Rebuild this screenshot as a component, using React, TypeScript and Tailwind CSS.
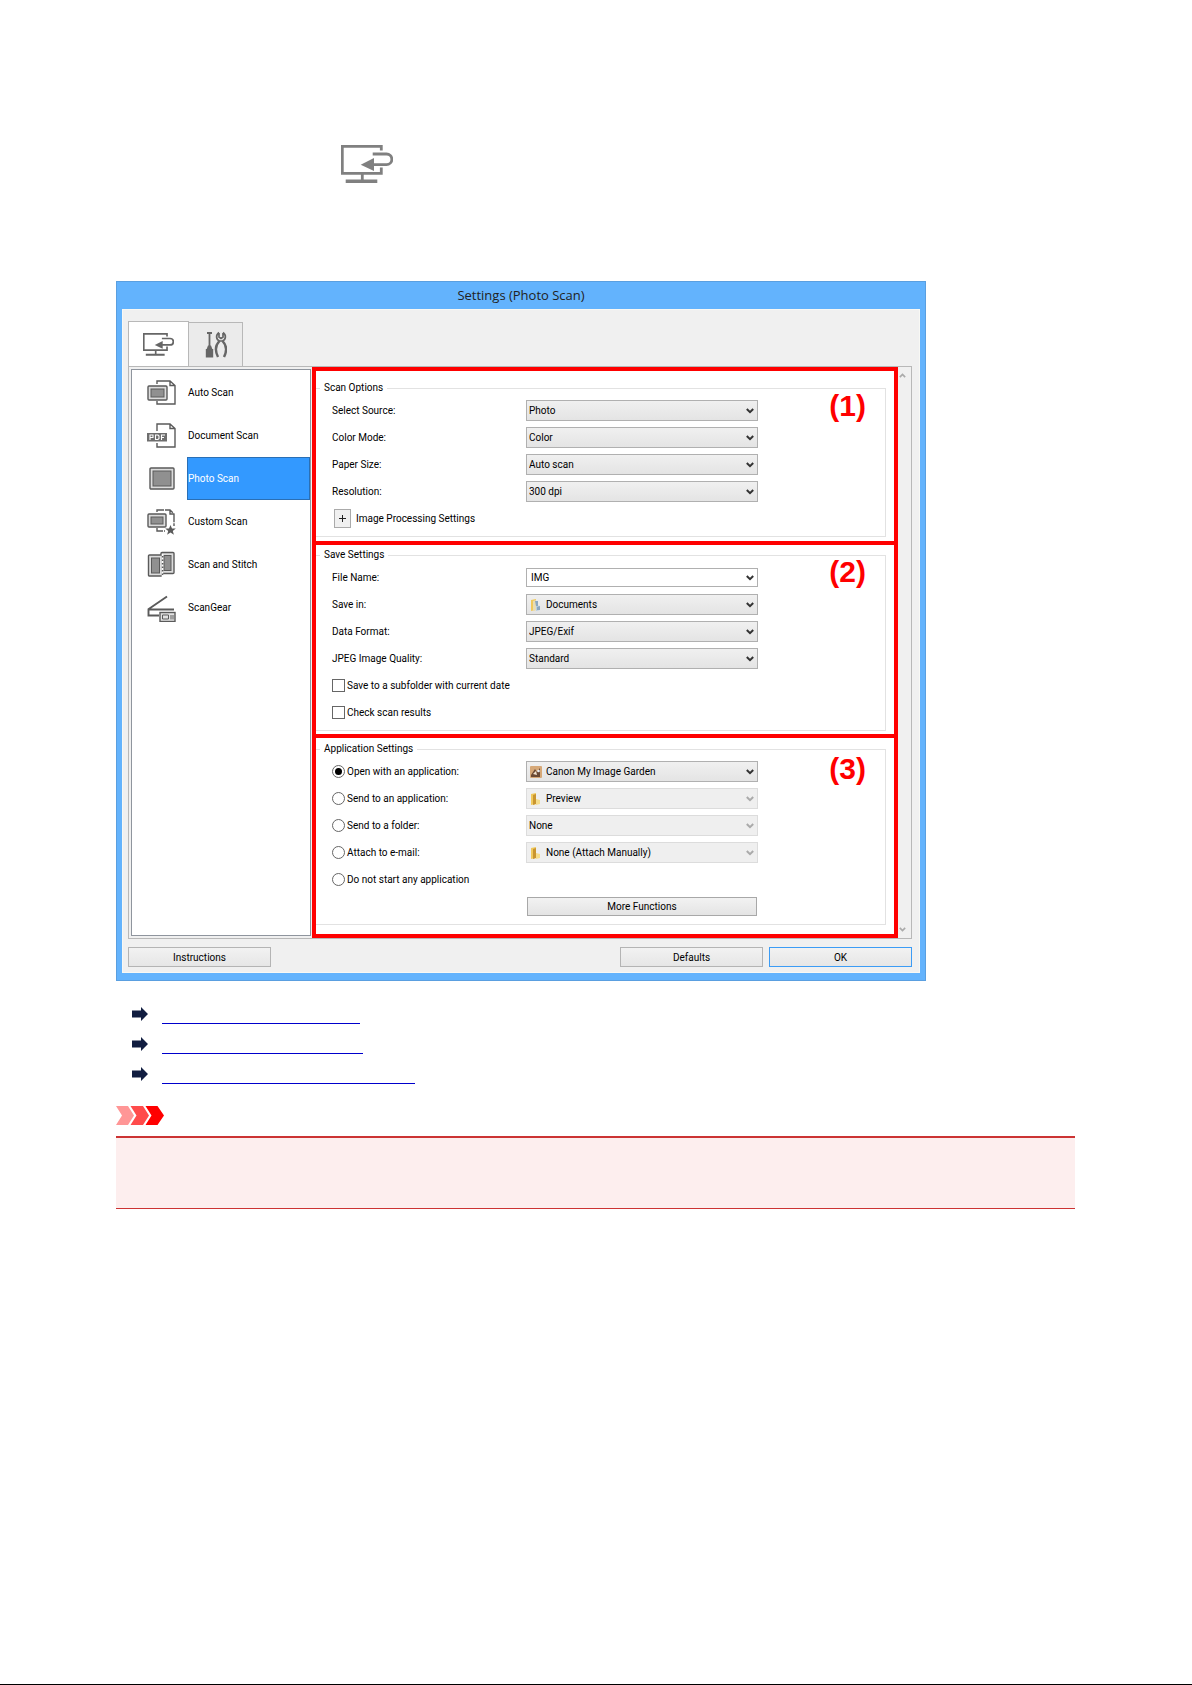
import type { ReactNode } from "react";

const MonitorIcon = ({ className }: { className: string }) => (
  <svg viewBox="0 0 52 38" className={className} fill="none" stroke="currentColor" aria-hidden="true">
    <path d="M40.3 5.5V1.3H1.3V28.3H40.3V22.5" strokeWidth="2.8" />
    <path d="M21.3 29v7" strokeWidth="2.8" />
    <path d="M4.7 36.2h31.6" strokeWidth="3.4" />
    <path d="M31.7 9H45.500a5.3 5.3 0 0 1 0 10.7H32" strokeWidth="2.8" />
    <path d="M19.7 19.7L33 13v13z" fill="currentColor" stroke="none" />
  </svg>
);

const ToolsIcon = () => (
  <svg viewBox="0 0 22 28" className="h-7 w-[22px] text-[#666]" fill="none" stroke="currentColor" aria-hidden="true">
    <path d="M2 2h5M4.500 2v13" strokeWidth="1.8" />
    <path d="M3 14.500h3l1.500 4h-6z" fill="currentColor" stroke="none" />
    <path d="M.8 18h7.400v8.500H.8z" fill="currentColor" stroke="none" />
    <path d="M14 1.500c-3.500 2.500-3 7 .5 8.500h3c3.500-1.500 4-6 .5-8.500M14 2v4l2 1.500L18 6V2" strokeWidth="1.700" />
    <path d="M14.500 10c-4 4-4.500 10-1.500 16M17.500 10c4 4 4.500 10 1.500 16" strokeWidth="2.400" />
  </svg>
);

const Svg = ({ children }: { children: ReactNode }) => (
  <svg viewBox="0 0 30 28" className="h-7 w-[30px] shrink-0" fill="none" stroke="#5a5a5a" strokeWidth="1.4" aria-hidden="true">
    {children}
  </svg>
);

const Frame = ({ x, y, w, h }: { x: number; y: number; w: number; h: number }) => (
  <>
    <rect x={x} y={y} width={w} height={h} rx="1" fill="#dcdcdc" />
    <rect x={x + 3} y={y + 3} width={w - 6} height={h - 6} fill="#909090" strokeWidth="1" />
  </>
);

const AutoIcon = () => (
  <Svg>
    <path d="M10 5V2H23L28 6.500V25H10V22M23 2v4.500h5" />
    <Frame x={1} y={7} w={19} h={14} />
  </Svg>
);
const DocumentIcon = () => (
  <Svg>
    <path d="M10 9V2H23L28 6.500V25H10V21M23 2v4.500h5" />
    <rect x="0" y="11" width="20" height="8.500" fill="#6e6e6e" stroke="none" />
    <path d="M3 18v-5h3v2.500H3M8.500 13v4.500h2.500l1-1V14l-1-1zM14.500 18v-5h3.500M14.500 15.500H17" stroke="#fff" strokeWidth="1.100" />
  </Svg>
);
const PhotoIcon = () => (
  <Svg>
    <Frame x={3} y={3} w={24} h={21} />
  </Svg>
);
const CustomIcon = () => (
  <Svg>
    <path d="M10 4V2H23L27 6V18M23 2v4h4M10 20v3h8" strokeDasharray="9 1" />
    <Frame x={1} y={6} w={18} h={13} />
    <path d="M23.500 17l1.500 3.500h3.800l-3 2.400 1.100 3.800-3.400-2.200-3.400 2.200 1.100-3.800-3-2.400h3.800z" fill="#5a5a5a" stroke="none" />
  </Svg>
);
const StitchIcon = () => (
  <Svg>
    <Frame x={14} y={1.500} w={13} h={21} />
    <Frame x={1.500} y={4} w={14} h={21} />
    <path d="M15.500 3v23" stroke="#fff" strokeDasharray="2 1.500" strokeWidth="1.600" />
  </Svg>
);
const GearIcon = () => (
  <Svg>
    <path d="M1 15.500L20 2.500M1 15.500H27M1.500 15v6.500H12" strokeWidth="1.900" />
    <rect x="13" y="18.500" width="15" height="9" fill="#e2e2e2" />
    <path d="M15.500 21h6v4h-6zM24 21v4.500M26 21v4.500" strokeWidth="1" />
  </Svg>
);

const Chevron = ({ className }: { className: string }) => (
  <svg viewBox="0 0 8 6" className={className} fill="none" stroke="currentColor" strokeWidth="2" aria-hidden="true">
    <path d="M.8 1L4 4.200 7.200 1" />
  </svg>
);

const FolderIcon = ({ doc }: { doc?: boolean }) => (
  <svg viewBox="0 0 12 14" className="h-3.5 w-3" aria-hidden="true">
    <path d="M1 2l5-1v11l-5 1z" fill="#f0c95c" />
    <path d="M3 3l3-1v10l-3 1z" fill={doc ? "#e8dcb4" : "#c9952f"} />
    <path d="M6 7l4 1v4l-4 1z" fill={doc ? "#b9cfe2" : "#f6dd8b"} />
    {doc && <path d="M5 3h3v5H6zM7 9l3-1v4H7z" fill="#8ba7c0" />}
  </svg>
);
const GardenIcon = () => (
  <svg viewBox="0 0 12 12" className="size-3" aria-hidden="true">
    <rect width="12" height="12" rx="1" fill="#d6a878" />
    <path d="M1 9l4-6 2 3 3-4v9H1z" fill="#6b4a35" />
    <path d="M3 8l3-3 1 4z" fill="#f3e3cf" />
    <circle cx="8.500" cy="5" r="1.300" fill="#e9eef4" />
  </svg>
);

type DropProps = { id: string; value: string; icon?: ReactNode; disabled?: boolean };

const Drop = ({ id, value, icon, disabled }: DropProps) => (
  <div className="relative w-[232px]">
    <select
      id={id}
      disabled={disabled}
      className={`block h-[21px] w-full appearance-none border pr-5 text-black opacity-100 ${icon ? "pl-[19px]" : "pl-0.5"} ${
        disabled ? "border-[#dcdcdc] bg-[#efefef]" : "border-[#b0b0b0] bg-linear-to-b from-[#f0f0f0] to-[#e4e4e4]"
      }`}
    >
      <option>{value}</option>
    </select>
    {icon && <span className="pointer-events-none absolute inset-y-0 left-1 flex items-center">{icon}</span>}
    <span className="pointer-events-none absolute inset-y-0 right-1 flex items-center">
      <Chevron className={`h-1.5 w-2 ${disabled ? "text-[#aaa]" : "text-[#333]"}`} />
    </span>
  </div>
);

const Row = ({ children }: { children: ReactNode }) => <div className="flex h-[27px] items-center">{children}</div>;

const SelectRow = ({ label, ...p }: DropProps & { label: string }) => (
  <Row>
    <label htmlFor={p.id} className="w-[194px]">{label}</label>
    <Drop {...p} />
  </Row>
);

const Check = ({ label }: { label: string }) => (
  <Row>
    <label className="flex items-center gap-0.5">
      <input type="checkbox" className="size-[13px] appearance-none border border-[#666] bg-white" />
      {label}
    </label>
  </Row>
);

const RadioRow = ({ label, checked, drop }: { label: string; checked?: boolean; drop?: DropProps }) => (
  <Row>
    <label className="flex w-[194px] items-center gap-0.5">
      <input
        type="radio"
        name="action"
        defaultChecked={checked}
        className="size-[13px] appearance-none rounded-full border border-[#666] bg-white bg-clip-content p-[2px] checked:bg-black"
      />
      {label}
    </label>
    {drop && <Drop {...drop} />}
  </Row>
);

const Group = ({ title, mark, box, badge, children }: { title: string; mark: string; box: string; badge: string; children: ReactNode }) => (
  <section className={`relative border-4 border-[#f00] bg-white pr-2 ${box}`}>
    <fieldset className="border border-l-0 border-[#e2e2e2] pt-0.5 pb-1 pl-4">
      <legend className="-ml-3 px-1 leading-[14px]">{title}</legend>
      {children}
    </fieldset>
    <span className={`absolute right-7 font-['Liberation_Sans',sans-serif] text-[30px] leading-[30px] font-bold text-[#f00] ${badge}`}>{mark}</span>
  </section>
);

const modes = [
  { name: "Auto Scan", Icon: AutoIcon },
  { name: "Document Scan", Icon: DocumentIcon },
  { name: "Photo Scan", Icon: PhotoIcon, active: true },
  { name: "Custom Scan", Icon: CustomIcon },
  { name: "Scan and Stitch", Icon: StitchIcon },
  { name: "ScanGear", Icon: GearIcon },
];

const links = [
  { href: "#scan-options", label: "Scan Options", width: "w-[198px]" },
  { href: "#save-settings", label: "Save Settings", width: "w-[201px]" },
  { href: "#application-settings", label: "Application Settings", width: "w-[253px]" },
];

const pushButton = "h-5 w-[143px] border bg-linear-to-b from-[#f2f2f2] to-[#e6e6e6]";

export default function App() {
  return (
    <main className="flex min-h-screen flex-col bg-white font-[Roboto,sans-serif] text-[10px] text-black">
      <div className="pt-[145px] pr-[117px] pl-[116px]">
        <MonitorIcon className="ml-[225px] h-[38px] w-[52px] text-[#808080]" />

        <div className="mt-[98px] w-full max-w-[810px] border border-[#5a9fe0] bg-[#63b3fd] px-[5px] pb-[7px]">
          <h1 className="h-[27px] text-center font-['Open_Sans',sans-serif] text-[13px] leading-[26px] text-[#222]">
            Settings (Photo Scan)
          </h1>
          <div className="border border-[#f8f8f4] bg-[#f0f0f0] pt-[11px] pr-[7px] pb-[5px] pl-[5px]">
            <div className="flex items-end" role="tablist">
              <button role="tab" aria-selected="true" aria-label="Scanning from a computer" className="flex h-[45px] w-[61px] items-center justify-center border border-b-0 border-[#b8b8b8] bg-white">
                <MonitorIcon className="h-[23px] w-[31px] text-[#666]" />
              </button>
              <button role="tab" aria-selected="false" aria-label="General settings" className="-ml-px flex h-[44px] w-[55px] items-center justify-center border border-b-0 border-[#b8b8b8] bg-[#ebebeb]">
                <ToolsIcon />
              </button>
            </div>

            <div className="flex border border-[#b8b8b8]">
              <ul className="m-0.5 mr-px w-[180px] shrink-0 border border-[#8f959e] bg-white pt-px">
                {modes.map(({ name, Icon, active }) => (
                  <li key={name}>
                    <button className="flex h-[43px] w-full items-center pl-[15px] text-left">
                      <Icon />
                      <span className={`ml-2.5 flex h-[43px] flex-1 items-center border ${active ? "border-[#2a6fb5] bg-[#3399ff] text-white" : "border-transparent"}`}>
                        {name}
                      </span>
                    </button>
                  </li>
                ))}
              </ul>

              <div className="min-w-0 flex-1">
                <Group title="Scan Options" mark="(1)" box="pt-2.5 pb-1" badge="top-5">
                  <SelectRow id="source" label="Select Source:" value="Photo" />
                  <SelectRow id="color" label="Color Mode:" value="Color" />
                  <SelectRow id="paper" label="Paper Size:" value="Auto scan" />
                  <SelectRow id="resolution" label="Resolution:" value="300 dpi" />
                  <Row>
                    <button aria-labelledby="processing" className="ml-0.5 flex h-[19px] w-[17px] items-center justify-center border border-[#aaa] bg-[#f0f0f0]">
                      <svg viewBox="0 0 7 7" className="size-[7px]" stroke="#222" aria-hidden="true">
                        <path d="M0 3.500h7M3.500 0v7" />
                      </svg>
                    </button>
                    <span id="processing" className="ml-[5px]">Image Processing Settings</span>
                  </Row>
                </Group>

                <Group title="Save Settings" mark="(2)" box="-mt-1 pt-[3px] pb-[3px]" badge="top-3">
                  <Row>
                    <label htmlFor="file" className="w-[194px]">File Name:</label>
                    <div className="relative w-[232px]">
                      <input id="file" type="text" defaultValue="IMG" className="block h-[19px] w-full border border-[#b0b0b0] bg-white px-1" />
                      <span className="pointer-events-none absolute inset-y-0 right-1 flex items-center">
                        <Chevron className="h-1.5 w-2 text-[#333]" />
                      </span>
                    </div>
                  </Row>
                  <SelectRow id="folder" label="Save in:" value="Documents" icon={<FolderIcon doc />} />
                  <SelectRow id="format" label="Data Format:" value="JPEG/Exif" />
                  <SelectRow id="quality" label="JPEG Image Quality:" value="Standard" />
                  <Check label="Save to a subfolder with current date" />
                  <Check label="Check scan results" />
                </Group>

                <Group title="Application Settings" mark="(3)" box="-mt-1 pt-1 pb-[9px]" badge="top-4">
                  <RadioRow label="Open with an application:" checked drop={{ id: "open", value: "Canon My Image Garden", icon: <GardenIcon /> }} />
                  <RadioRow label="Send to an application:" drop={{ id: "send", value: "Preview", icon: <FolderIcon />, disabled: true }} />
                  <RadioRow label="Send to a folder:" drop={{ id: "sendFolder", value: "None", disabled: true }} />
                  <RadioRow label="Attach to e-mail:" drop={{ id: "attach", value: "None (Attach Manually)", icon: <FolderIcon />, disabled: true }} />
                  <RadioRow label="Do not start any application" />
                  <Row>
                    <button className="ml-[195px] h-[19px] w-[230px] border border-[#a8a8a8] bg-linear-to-b from-[#f2f2f2] to-[#e4e4e4]">
                      More Functions
                    </button>
                  </Row>
                </Group>
              </div>

              <div className="flex w-[13px] flex-col items-start justify-between py-1.5 pl-px text-[#aaa]">
                <Chevron className="h-[5px] w-[7px] rotate-180" />
                <Chevron className="h-[5px] w-[7px]" />
              </div>
            </div>

            <div className="mt-2 flex gap-1.5">
              <button className={`${pushButton} border-[#b4b4b4]`}>Instructions</button>
              <button className={`${pushButton} ml-auto border-[#b4b4b4]`}>Defaults</button>
              <button className={`${pushButton} border-[#3c9cf5]`}>OK</button>
            </div>
          </div>
        </div>

        <ul className="mt-[18px] ml-4">
          {links.map(({ href, label, width }) => (
            <li key={href} className="flex h-[30px] items-start">
              <svg viewBox="0 0 16 14" className="mt-2 h-3.5 w-4" fill="#111d40" aria-hidden="true">
                <path d="M0 3.500h9V0l7 7-7 7v-3.500H0z" />
              </svg>
              <a href={href} aria-label={label} className={`ml-3.5 h-[25px] border-b border-[#0000cc] ${width}`} />
            </li>
          ))}
        </ul>

        <svg viewBox="0 0 48 19" className="mt-[17px] h-[19px] w-12" role="img" aria-label="Important">
          <path d="M0 0h12l6 9.500-6 9.500H0l6-9.500z" fill="#ff9696" />
          <path d="M14.500 0H27l6 9.500-6 9.500H14.500l6-9.500z" fill="#ff4b4b" />
          <path d="M29.500 0H41.500l6.500 9.500-6.500 9.500H29.500l6-9.500z" fill="#f00" />
        </svg>
        <div className="mt-[11px] h-[73px] border-t-2 border-b border-[#cc3333] bg-[#fdeeee]" />
      </div>
      <div className="mt-auto h-px bg-black" />
    </main>
  );
}
